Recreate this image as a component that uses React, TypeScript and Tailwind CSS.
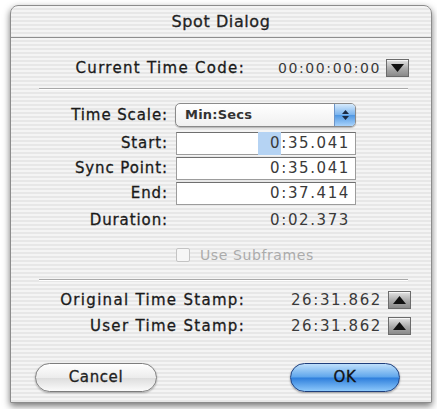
import React from 'react'

const font = "font-['DejaVu_Sans','Liberation_Sans',sans-serif]"
const label = 'text-right text-[15px] text-[#1a1a1a] [-webkit-text-stroke:0.3px_#1a1a1a]'
const num = 'text-right text-[15px] tracking-[1.6px] text-[#3a3a3a]'

function ArrowButton({ up }: { up?: boolean }) {
  return (
    <div className="flex h-[18px] w-[23px] items-center justify-center border border-[#6b6b6b] bg-[linear-gradient(to_bottom,#e4e4e4,#a9a9a9_55%,#8a8a8a)] shadow-[inset_0_1px_0_rgba(255,255,255,0.7)]">
      <svg width="13" height="8" viewBox="0 0 13 8">
        {up ? <polygon points="0,8 13,8 6.5,0" fill="#111" /> : <polygon points="0,0 13,0 6.5,8" fill="#111" />}
      </svg>
    </div>
  )
}

function Field({ text, value, selected }: { text: string; value: string; selected?: boolean }) {
  return (
    <div className="flex h-[23px] items-center">
      <div className={`w-[157px] tracking-[0.9px] ${label}`}>{text}</div>
      <div className={`ml-[8px] flex h-[23px] w-[180px] items-center justify-end border border-[#9c9c9c] border-t-[#6f6f6f] bg-white pr-[5px] ${num}`}>
        {selected ? (
          <>
            <span className="bg-[#b5d3f3] pl-[12px]">0</span>
            <span>{value.slice(1)}</span>
          </>
        ) : (
          value
        )}
      </div>
    </div>
  )
}

function Separator() {
  return (
    <div className="ml-[28px] w-[369px]">
      <div className="h-px bg-[#a9a9a9]" />
      <div className="h-px bg-white" />
    </div>
  )
}

export default function App() {
  return (
    <div className={`h-[409px] w-[437px] overflow-hidden bg-white pl-[10px] pt-[5px] ${font}`}>
      <div className="flex h-[398px] w-[422px] flex-col overflow-hidden rounded-t-[8px] border border-[#8c8c8c] bg-[repeating-linear-gradient(to_bottom,#f4f4f4_0px,#f4f4f4_2px,#e7e7e7_2px,#e7e7e7_4px)] shadow-[0_3px_7px_rgba(0,0,0,0.55)]">
        <div className="flex h-[32px] items-center justify-center border-b border-[#8e8e8e] text-[16px] tracking-[0.6px] text-[#222] [-webkit-text-stroke:0.3px_#222]">
          Spot Dialog
        </div>

        <div className="mt-[20px] flex h-[20px] items-center">
          <div className={`w-[234px] tracking-[1.3px] ${label}`}>Current Time Code:</div>
          <div className="w-[136px] text-right text-[14px] tracking-[1.6px] text-[#3a3a3a]">00:00:00:00</div>
          <div className="ml-[5px]">
            <ArrowButton />
          </div>
        </div>

        <div className="mt-[10px]">
          <Separator />
        </div>

        <div className="mt-[13px] flex h-[24px] items-center">
          <div className={`w-[157px] tracking-[0.9px] ${label}`}>Time Scale:</div>
          <div className="ml-[7px] flex h-[24px] w-[181px] items-center overflow-hidden rounded-[5px] border border-[#8a8a8a] bg-[linear-gradient(to_bottom,#ffffff,#f0f0f0)] shadow-[0_1px_1px_rgba(0,0,0,0.25)]">
            <div className="flex-1 pl-[9px] text-[13px] font-bold tracking-[0.2px] text-[#333]">Min:Secs</div>
            <div className="flex h-full w-[21px] flex-col items-center justify-center gap-[2px] border-l border-[#6d95c8] bg-[linear-gradient(to_bottom,#d6eafc,#79b3ee_50%,#4f97e3_51%,#a9d3fb)]">
              <svg width="7" height="4" viewBox="0 0 7 4">
                <polygon points="0,4 7,4 3.5,0" fill="#1b2b44" />
              </svg>
              <svg width="7" height="4" viewBox="0 0 7 4">
                <polygon points="0,0 7,0 3.5,4" fill="#1b2b44" />
              </svg>
            </div>
          </div>
        </div>

        <div className="mt-[5px]">
          <Field text="Start:" value="0:35.041" selected />
        </div>
        <div className="mt-[2px]">
          <Field text="Sync Point:" value="0:35.041" />
        </div>
        <div className="mt-[2px]">
          <Field text="End:" value="0:37.414" />
        </div>

        <div className="mt-[4px] flex h-[22px] items-center">
          <div className={`w-[157px] tracking-[0.9px] ${label}`}>Duration:</div>
          <div className={`ml-[8px] w-[180px] pr-[6px] ${num}`}>0:02.373</div>
        </div>

        <div className="mt-[17px] flex h-[14px] items-center">
          <div className="ml-[165px] h-[14px] w-[14px] rounded-[2px] border border-[#c4c4c4] bg-[#f6f6f6]" />
          <div className="ml-[10px] text-[14px] tracking-[0.6px] text-[#ababab]">Use Subframes</div>
        </div>

        <div className="mt-[17px]">
          <Separator />
        </div>

        <div className="mt-[10px] flex h-[18px] items-center">
          <div className={`w-[234px] tracking-[1.3px] ${label}`}>Original Time Stamp:</div>
          <div className={`w-[137px] ${num}`}>26:31.862</div>
          <div className="ml-[6px]">
            <ArrowButton up />
          </div>
        </div>
        <div className="mt-[8px] flex h-[18px] items-center">
          <div className={`w-[234px] tracking-[1.3px] ${label}`}>User Time Stamp:</div>
          <div className={`w-[137px] ${num}`}>26:31.862</div>
          <div className="ml-[6px]">
            <ArrowButton up />
          </div>
        </div>

        <div className="mt-[28px] flex h-[29px] items-center">
          <button className="ml-[24px] flex h-[29px] w-[122px] items-center justify-center rounded-full border border-[#7d7d7d] bg-[linear-gradient(to_bottom,#ffffff,#ececec_50%,#dcdcdc_51%,#fbfbfb)] text-[15px] tracking-[0.6px] text-[#222] shadow-[0_1px_2px_rgba(0,0,0,0.3)] [-webkit-text-stroke:0.3px_#222]">
            Cancel
          </button>
          <button className="ml-auto mr-[31px] flex h-[29px] w-[110px] items-center justify-center rounded-full border border-[#1f3f7c] bg-[linear-gradient(to_bottom,#bfe0fb,#5fa6ec_48%,#2f7fdc_52%,#8cc8fb)] text-[15px] tracking-[0.6px] text-[#111] shadow-[0_1px_2px_rgba(0,0,0,0.35)] [-webkit-text-stroke:0.3px_#111]">
            OK
          </button>
        </div>
      </div>
    </div>
  )
}
